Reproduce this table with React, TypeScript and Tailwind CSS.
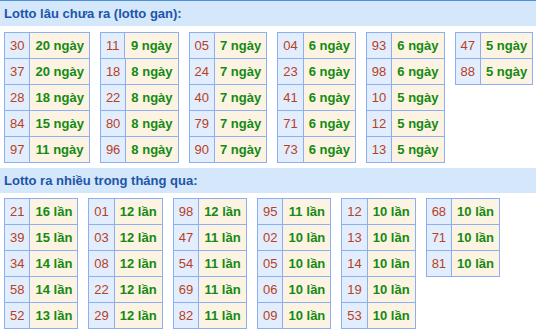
const ganTables: [string, string][][] = [
  [["30", "20 ngày"], ["37", "20 ngày"], ["28", "18 ngày"], ["84", "15 ngày"], ["97", "11 ngày"]],
  [["11", "9 ngày"], ["18", "8 ngày"], ["22", "8 ngày"], ["80", "8 ngày"], ["96", "8 ngày"]],
  [["05", "7 ngày"], ["24", "7 ngày"], ["40", "7 ngày"], ["79", "7 ngày"], ["90", "7 ngày"]],
  [["04", "6 ngày"], ["23", "6 ngày"], ["41", "6 ngày"], ["71", "6 ngày"], ["73", "6 ngày"]],
  [["93", "6 ngày"], ["98", "6 ngày"], ["10", "5 ngày"], ["12", "5 ngày"], ["13", "5 ngày"]],
  [["47", "5 ngày"], ["88", "5 ngày"]],
];

const hotTables: [string, string][][] = [
  [["21", "16 lần"], ["39", "15 lần"], ["34", "14 lần"], ["58", "14 lần"], ["52", "13 lần"]],
  [["01", "12 lần"], ["03", "12 lần"], ["08", "12 lần"], ["22", "12 lần"], ["29", "12 lần"]],
  [["98", "12 lần"], ["47", "11 lần"], ["54", "11 lần"], ["69", "11 lần"], ["82", "11 lần"]],
  [["95", "11 lần"], ["02", "10 lần"], ["05", "10 lần"], ["06", "10 lần"], ["09", "10 lần"]],
  [["12", "10 lần"], ["13", "10 lần"], ["14", "10 lần"], ["19", "10 lần"], ["53", "10 lần"]],
  [["68", "10 lần"], ["71", "10 lần"], ["81", "10 lần"]],
];

function LottoTable({ rows }: { rows: [string, string][] }) {
  return (
    <div className="flex flex-col shrink-0 self-start border-l border-t border-[#8aaff2] whitespace-nowrap">
      {rows.map(([num, count], i) => (
        <div className="flex h-[26px]" key={i}>
          <div className="flex items-center justify-center px-[5px] bg-[#e2eefd] border-r border-b border-[#8aaff2] text-[#b8401e]">
            {num}
          </div>
          <div className="flex flex-1 items-center justify-center px-[5px] bg-[#fdf3e2] border-r border-b border-[#8aaff2] font-bold text-[#138a13]">
            {count}
          </div>
        </div>
      ))}
    </div>
  );
}

function Section({ title, tables, className, gapClass }: { title: string; tables: [string, string][][]; className?: string; gapClass: string }) {
  return (
    <section className={className}>
      <h2 className="h-[25px] flex items-center px-1 bg-[#d4e7fb] text-[13px] font-bold text-[#1c55a9]">
        {title}
      </h2>
      <div className={`flex gap-[10px] px-1 ${gapClass}`}>
        {tables.map((rows, i) => (
          <LottoTable rows={rows} key={i} />
        ))}
      </div>
    </section>
  );
}

export default function App() {
  return (
    <div
      className="w-[536px] h-[329px] overflow-hidden bg-white border-t border-[#4a8fe0] text-[13px] leading-none"
      style={{ fontFamily: '"Liberation Sans", Arial, sans-serif' }}>
      <Section title="Lotto lâu chưa ra (lotto gan):" tables={ganTables} gapClass="mt-[6px]" />
      <Section title="Lotto ra nhiều trong tháng qua:" tables={hotTables} className="mt-[5px]" gapClass="mt-[5px]" />
    </div>
  );
}
